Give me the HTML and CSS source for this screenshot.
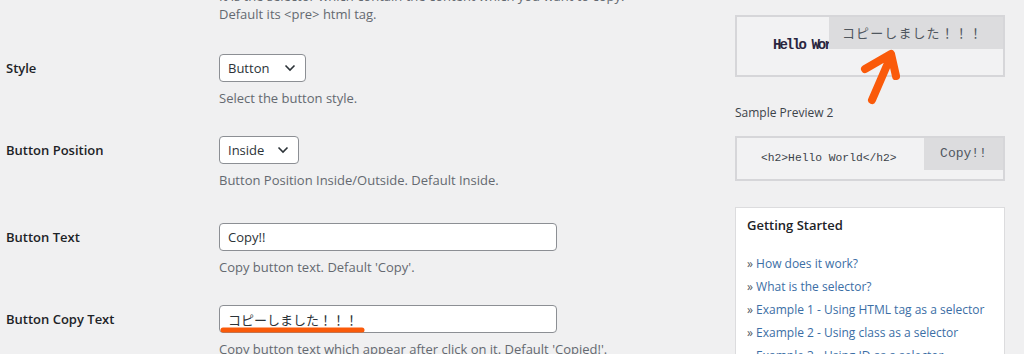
FILE: index.html
```html
<!DOCTYPE html>
<html lang="en">
<head>
  <meta charset="UTF-8">
  <title>Copy Button Settings</title>
  <link rel="stylesheet" href="styles.css">
</head>
<body>
  <div class="main">
    <div class="row row-first">
      <div class="label"></div>
      <div class="field">
        <p class="desc">It is the selector which contain the content which you want to copy.<br>Default its &lt;pre&gt; html tag.</p>
      </div>
    </div>
    <div class="row">
      <div class="label">Style</div>
      <div class="field">
        <div class="select select-style">
          <span>Button</span>
          <svg width="12" height="8" viewBox="0 0 12 8"><path d="M1.5 1.5 6 6l4.5-4.5" fill="none" stroke="#2c3338" stroke-width="1.6"/></svg>
        </div>
        <p class="desc">Select the button style.</p>
      </div>
    </div>
    <div class="row">
      <div class="label">Button Position</div>
      <div class="field">
        <div class="select select-pos">
          <span>Inside</span>
          <svg width="12" height="8" viewBox="0 0 12 8"><path d="M1.5 1.5 6 6l4.5-4.5" fill="none" stroke="#2c3338" stroke-width="1.6"/></svg>
        </div>
        <p class="desc">Button Position Inside/Outside. Default Inside.</p>
      </div>
    </div>
    <div class="row row-wide">
      <div class="label">Button Text</div>
      <div class="field">
        <div class="input">Copy!!</div>
        <p class="desc">Copy button text. Default 'Copy'.</p>
      </div>
    </div>
    <div class="row">
      <div class="label">Button Copy Text</div>
      <div class="field">
        <div class="input input-marked">
          <span class="jp">コピーしました！！！</span>
          <svg class="underline" width="150" height="8" viewBox="0 0 150 8"><path d="M3 4h139" stroke="#fa5a0a" stroke-width="5" stroke-linecap="round"/></svg>
        </div>
        <p class="desc">Copy button text which appear after click on it. Default 'Copied!'.</p>
      </div>
    </div>
  </div>

  <div class="side">
    <div class="preview preview-one">
      <div class="pre-bold">Hello World</div>
      <div class="tip jp">コピーしました！！！</div>
      <svg class="arrow" width="44" height="60" viewBox="0 0 44 60"><path d="M12 52 31 8M5 21 31 6l5 22" fill="none" stroke="#fa5a0a" stroke-width="8" stroke-linecap="round" stroke-linejoin="round"/></svg>
    </div>
    <div class="side-label">Sample Preview 2</div>
    <div class="preview preview-two">
      <div class="pre-code">&lt;h2&gt;Hello World&lt;/h2&gt;</div>
      <div class="copy-btn">Copy!!</div>
    </div>
    <div class="box">
      <div class="box-title">Getting Started</div>
      <ul class="links">
        <li>» <a href="#">How does it work?</a></li>
        <li>» <a href="#">What is the selector?</a></li>
        <li>» <a href="#">Example 1 - Using HTML tag as a selector</a></li>
        <li>» <a href="#">Example 2 - Using class as a selector</a></li>
        <li>» <a href="#">Example 3 - Using ID as a selector</a></li>
      </ul>
    </div>
  </div>
</body>
</html>
```

FILE: styles.css
```css
body {
  margin: 0;
  background: #f0f0f1;
  font-family: "Open Sans", "Noto Sans CJK JP", sans-serif;
  font-size: 13px;
  color: #3c434a;
  display: flex;
  align-items: flex-start;
  height: 354px;
  overflow: hidden;
}
.jp { font-family: "Noto Sans CJK JP", sans-serif; }

/* settings table */
.main {
  width: 729px;
  padding-left: 6px;
  margin-top: -13px;
}
.row {
  display: grid;
  grid-template-columns: 213px 1fr;
  padding: 15px 0 14px;
}
.row-first { padding: 0 0 16px; }
.row-wide { padding-top: 20px; }
.label {
  font-size: 13px;
  font-weight: 600;
  color: #1d2327;
  line-height: 28px;
}
.desc {
  margin: 7px 0 0;
  line-height: 18px;
  color: #646970;
}
.row-first .desc { margin: 0; }
.select, .input {
  box-sizing: border-box;
  height: 28px;
  background: #fff;
  border: 1px solid #8c8f94;
  border-radius: 4px;
  font-size: 13px;
  color: #2c3338;
  display: flex;
  align-items: center;
  padding: 0 8px;
}
.select { justify-content: space-between; padding-right: 9px; }
.select-style { width: 87px; }
.select-pos { width: 80px; }
.input { width: 338px; }
.input-marked { position: relative; }
.underline { position: absolute; left: 0; top: 20px; }

/* sidebar */
.side {
  width: 270px;
  padding-top: 15px;
}
.preview {
  position: relative;
  border: 2px solid #d6d6d9;
  background: #f2f2f3;
}
.preview-one { height: 58px; }
.pre-bold {
  font-family: "Liberation Mono", monospace;
  font-weight: bold;
  font-size: 14px;
  letter-spacing: -2px;
  color: #2a2540;
  padding: 20px 0 0 36px;
}
.tip {
  position: absolute;
  top: 0;
  right: 0;
  width: 174px;
  height: 32px;
  box-sizing: border-box;
  padding-left: 13px;
  line-height: 32px;
  background: #dcdcde;
  color: #50575e;
  font-size: 13px;
  letter-spacing: 1.1px;
}
.arrow { position: absolute; left: 123px; top: 31px; }
.side-label {
  margin: 27px 0 14px;
  line-height: 18px;
  font-size: 12px;
  color: #3c434a;
}
.preview-two { height: 41px; }
.pre-code {
  font-family: "Liberation Mono", monospace;
  font-size: 11.3px;
  color: #3c434a;
  padding: 14px 0 0 24px;
}
.copy-btn {
  position: absolute;
  top: 0;
  right: 0;
  width: 79px;
  height: 32px;
  line-height: 32px;
  text-align: center;
  background: #dcdcde;
  font-family: "Liberation Mono", monospace;
  font-size: 13px;
  color: #50575e;
}
.box {
  margin-top: 26px;
  background: #fff;
  border: 1px solid #dcdcde;
  padding: 7px 11px 0;
  height: 200px;
}
.box-title {
  font-size: 13px;
  font-weight: 600;
  color: #1d2327;
  line-height: 20px;
}
.links {
  list-style: none;
  margin: 17px 0 0;
  padding: 0;
}
.links li {
  line-height: 23px;
  font-size: 12px;
  white-space: nowrap;
  color: #50575e;
}
.links a {
  color: #3b6ea5;
  text-decoration: none;
}
```
